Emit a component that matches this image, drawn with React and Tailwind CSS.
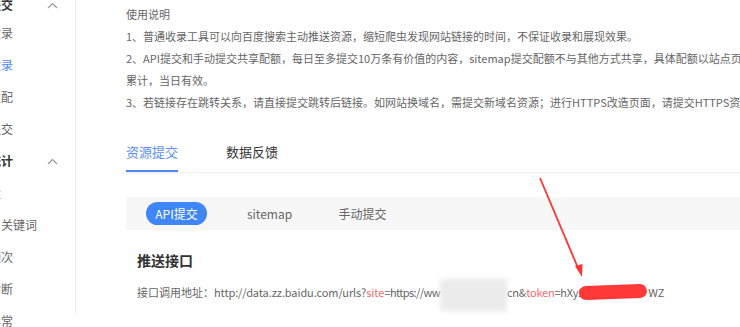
import React from 'react';

const font = { fontFamily: '"Noto Sans CJK SC", "Noto Sans", sans-serif' };

function Chevron() {
  return (
    <svg width="11" height="7" viewBox="0 0 11 7" className="ml-auto mr-[17px]">
      <path d="M1 6 L5.5 1.5 L10 6" fill="none" stroke="#999" strokeWidth="1.2" />
    </svg>
  );
}

function Sidebar() {
  const items = [
    { label: '资源提交', title: true, h: 'h-[24px]' },
    { label: '普通收录' },
    { label: '快速收录', active: true },
    { label: '移动适配' },
    { label: '死链提交' },
    { label: '数据统计', title: true },
    { label: '索引量', active: true },
    { label: '流量与关键词' },
    { label: '抓取频次' },
    { label: '抓取诊断' },
    { label: '抓取异常' },
  ];
  return (
    <div className="w-[76px] h-[314px] shrink-0 border-r border-[#eeeeee]">
      <div className="ml-[-35px] mt-[-7px] flex flex-col text-[12px]">
        {items.map((it, i) => (
          <div key={i} className={`${it.h || 'h-[32px]'} flex items-center whitespace-nowrap`}>
            <span
              className={
                it.title
                  ? 'font-bold text-[#333]'
                  : it.active
                  ? 'text-[#4d88f5]'
                  : 'text-[#666]'
              }
            >
              {it.label}
            </span>
            {it.title && <Chevron />}
          </div>
        ))}
      </div>
    </div>
  );
}

export default function App() {
  return (
    <div className="relative w-[740px] h-[327px] overflow-hidden bg-white flex" style={font}>
      <Sidebar />
      <main className="flex-1 min-w-0 pl-[50px]">
        <div className="pt-[3px] text-[11px] leading-[22px] text-[#666] whitespace-nowrap">
          <p>使用说明</p>
          <p>1、普通收录工具可以向百度搜索主动推送资源，缩短爬虫发现网站链接的时间，不保证收录和展现效果。</p>
          <p>2、API提交和手动提交共享配额，每日至多提交10万条有价值的内容，sitemap提交配额不与其他方式共享，具体配额以站点页面显示数据为准。配额不可</p>
          <p>累计，当日有效。</p>
          <p>3、若链接存在跳转关系，请直接提交跳转后链接。如网站换域名，需提交新域名资源；进行HTTPS改造页面，请提交HTTPS资源。</p>
        </div>

        <div className="mt-[29px] w-[700px] flex gap-[48px] border-b border-[#eeeeee] text-[13px] leading-[20px]">
          <div className="pb-[8px] border-b-2 border-[#4d88f5] text-[#5b8ef5]">资源提交</div>
          <div className="pb-[8px] text-[#333]">数据反馈</div>
        </div>

        <div className="mt-[24px] w-[700px] h-[33px] bg-[#f7f7f7] flex items-center text-[12px] text-[#666]">
          <div className="ml-[20px] w-[61px] h-[23px] rounded-full bg-[#3f86f8] text-white flex items-center justify-center">
            API提交
          </div>
          <div className="ml-[32px] w-[61px] text-center">sitemap</div>
          <div className="ml-[32px] w-[61px] text-center">手动提交</div>
        </div>

        <h2 className="mt-[20px] pl-[11px] text-[14px] leading-[20px] font-bold text-[#333]">推送接口</h2>

        <div className="mt-[12px] pl-[11px] flex items-center h-[20px] text-[11px] text-[#666] whitespace-nowrap">
          <span>接口调用地址：</span>
          <span className="tracking-[-0.1px]">http://data.zz.baidu.com/urls?</span>
          <span className="text-[#f56c6c]">site</span>
          <span className="tracking-[-0.6px]">=https://ww</span>
          <span className="inline-block w-[67px] h-[32px] my-[-6px] translate-y-[3px] bg-[#ebebeb] blur-[2px]" />
          <span className="tracking-[-0.2px]">cn&amp;</span>
          <span className="text-[#f56c6c] tracking-[-0.2px]">token</span>
          <span className="tracking-[-0.2px]">=hXy2</span>
          <span className="inline-block w-[68px] h-[14px] ml-[-5px] mr-[1px] rounded-full bg-[#ff3838] -rotate-2" />
          <span>WZ</span>
        </div>
      </main>

      <svg className="absolute left-0 top-0 pointer-events-none" width="740" height="327">
        <line x1="540" y1="178" x2="578" y2="268" stroke="#f33" strokeWidth="1.8" />
        <path d="M575 266 L582 277 L582.5 264 Z" fill="#f33" />
      </svg>
    </div>
  );
}
